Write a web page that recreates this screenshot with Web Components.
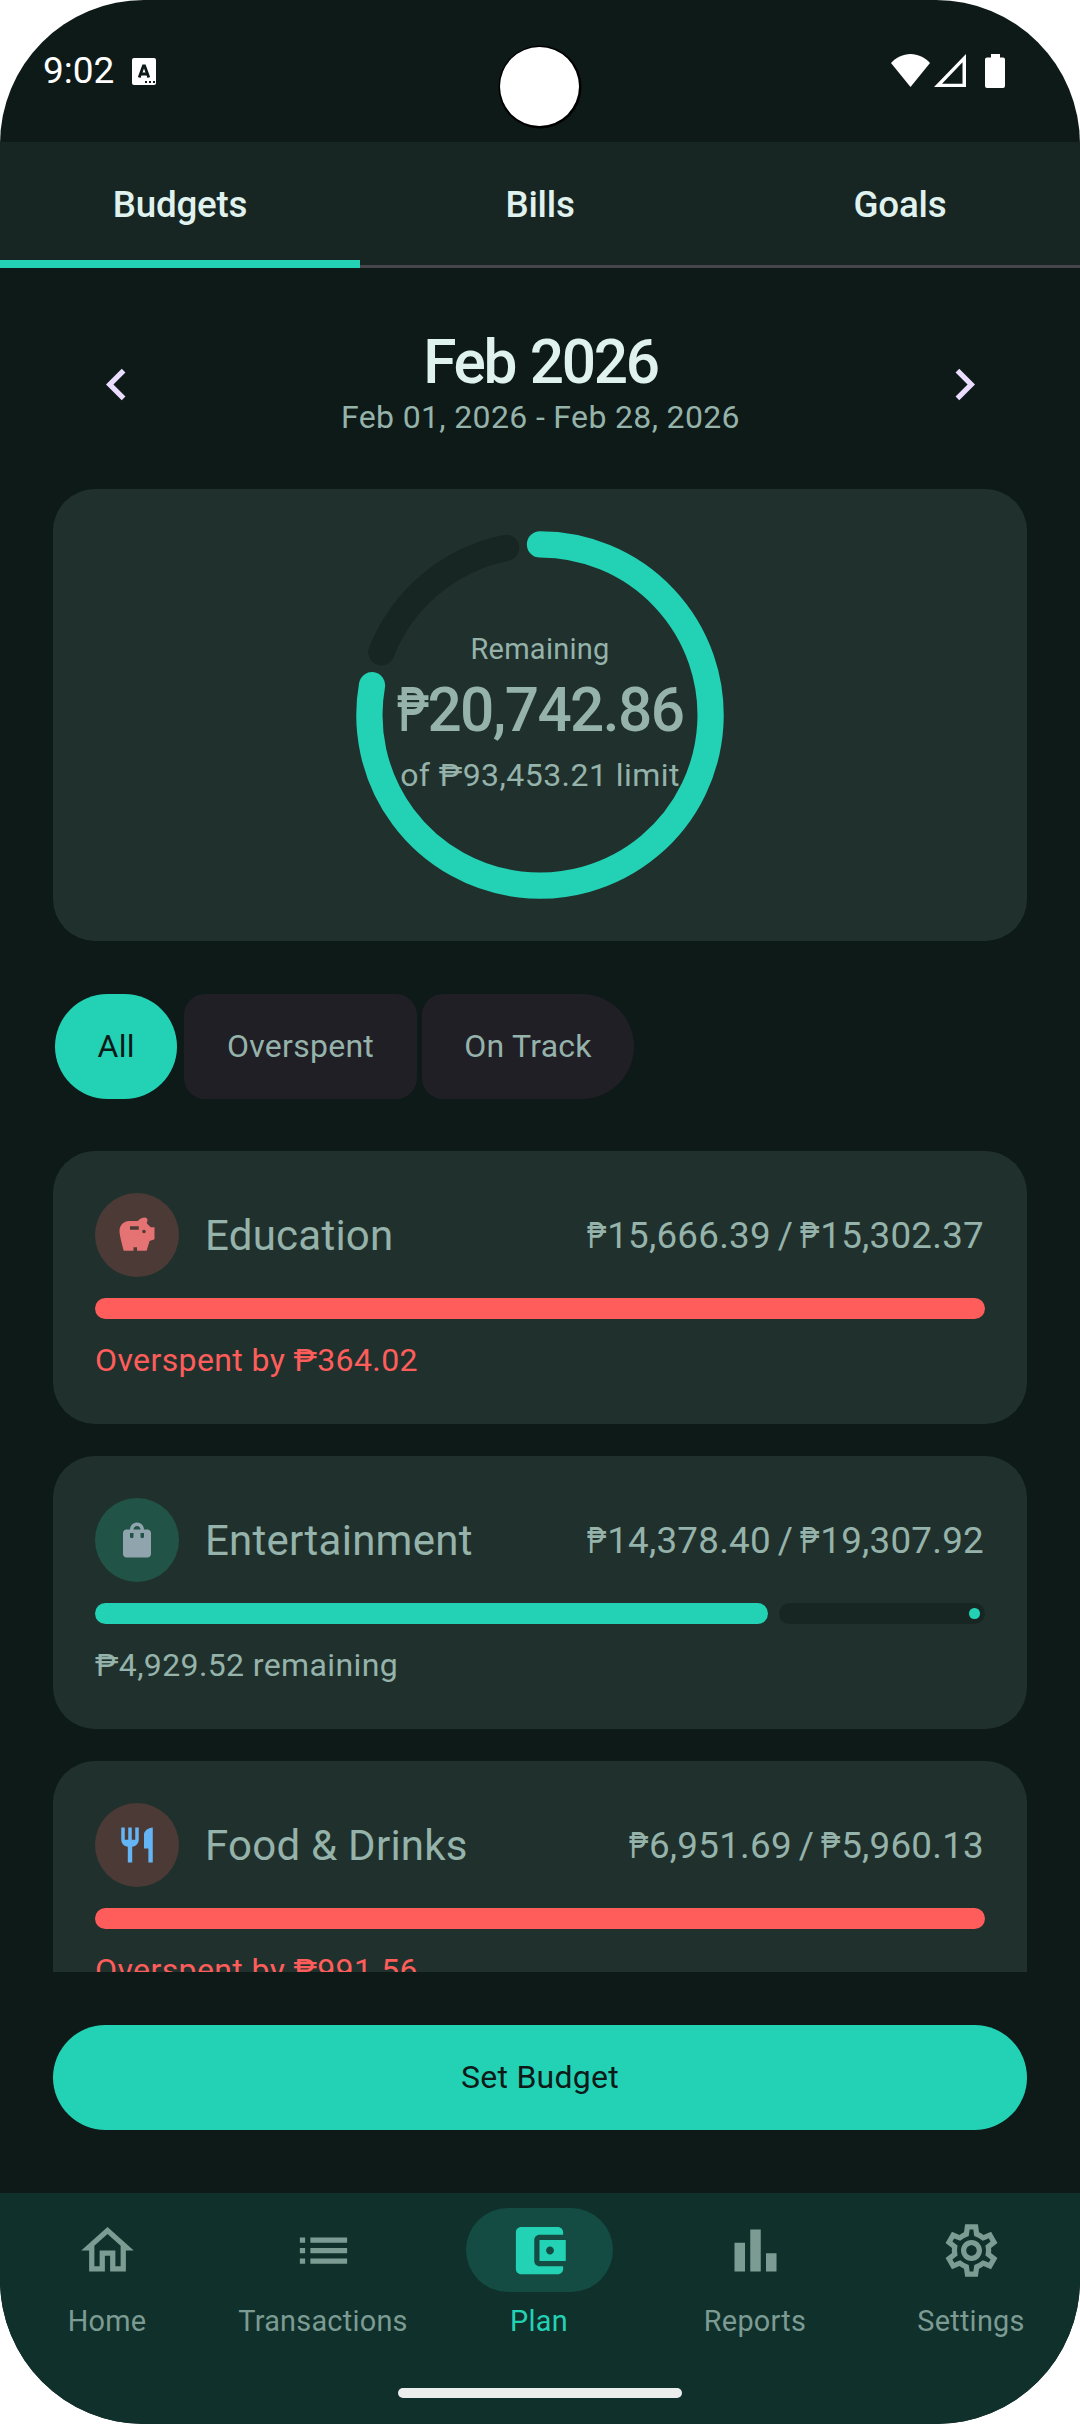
<!DOCTYPE html>
<html lang="en">
<head>
<meta charset="utf-8">
<title>Budgets</title>
<style>
    body {
        margin: 0;
        background: #fff;
        font-family: Roboto, "Noto Sans", sans-serif;
        --accent: #23d2b5;
        --danger: #ff5d5b;
        --bg: #0e1a18;
        --surface: #172623;
        --card: #20312d;
        --text: #e0f2ee;
        --muted: #95b3aa;
    }
</style>
</head>
<body>

<template id="phone-screen-template">
    <style>
        :host {
            display: flex;
            flex-direction: column;
            width: 1080px;
            height: 2424px;
            overflow: hidden;
            border-radius: 144px;
            background: var(--bg);
            color: var(--muted);
        }
        main {
            flex: 1;
            min-height: 0;
            display: flex;
            flex-direction: column;
            padding: 0 53px 63px;
        }
    </style>
    <slot name="top"></slot>
    <main><slot></slot></main>
    <slot name="bottom"></slot>
</template>

<template id="status-bar-template">
    <style>
        :host {
            display: flex;
            align-items: flex-start;
            box-sizing: border-box;
            height: 142px;
            padding: 54px 75px 0 43px;
            color: #fff;
            position: relative;
        }
        .time { font-size: 37px; line-height: 33px; margin-right: 16px; width: 73px; white-space: nowrap; }
        svg { display: block; }
        .badge { margin-top: 4px; }
        .space { flex: 1; }
        .wifi { margin-right: 4px; }
        .signal { margin-right: 19px; }
        /* the camera cut-out lies over the bar */
        .camera {
            position: absolute;
            left: 499.5px;
            top: 46.5px;
            width: 79px;
            height: 79px;
            border-radius: 50%;
            background: #fff;
            box-shadow: 0.5px 0.5px 0 2px #000;
        }
    </style>
    <span class="time"><slot></slot></span>
    <svg class="badge" width="24" height="27" viewBox="0 0 24 27">
        <rect width="24" height="27" rx="2" fill="#fff"/>
        <path d="M7.2 19.500L11.4 8h1.200l4.200 11.500M8.800 16h6.400" fill="none" stroke="#0e1a18" stroke-width="2.800"/>
        <path d="M13 24h2M17 24h2M21 24h2" stroke="#0e1a18" stroke-width="2"/>
    </svg>
    <span class="space"></span>
    <svg class="wifi" width="39" height="33" viewBox="0 0 39 33">
        <path d="M0 9C5 3.500 12 0 19.500 0S34 3.500 39 9L19.500 33z" fill="#fff"/>
    </svg>
    <svg class="signal" width="32" height="33" viewBox="0 0 32 33">
        <path d="M32 0v33H0zM28.500 8.200L8 29.700h20.500z" fill="#fff" fill-rule="evenodd"/>
    </svg>
    <svg width="20" height="34" viewBox="0 0 20 34">
        <path d="M6 0h9v3.500h3a2 2 0 0 1 2 2V32a2 2 0 0 1-2 2H2a2 2 0 0 1-2-2V5.500a2 2 0 0 1 2-2h4z" fill="#fff"/>
    </svg>
    <div class="camera"></div>
</template>

<template id="tab-strip-template">
    <style>
        :host {
            display: grid;
            grid-template-columns: repeat(3, 1fr);
            height: 126px;
            background: var(--surface);
            box-shadow: inset 0 -3px #47464d;
        }
    </style>
    <slot></slot>
</template>

<template id="tab-item-template">
    <style>
        :host {
            display: flex;
            align-items: center;
            justify-content: center;
            padding-bottom: 2px;
            color: var(--text);
            font-size: 36.75px;
            font-weight: 500;
            letter-spacing: -0.2px;
        }
        :host([selected]) { box-shadow: inset 0 -8px var(--accent); }
    </style>
    <slot></slot>
</template>

<template id="month-switcher-template">
    <style>
        :host {
            display: flex;
            justify-content: space-between;
            padding: 61px 31px 0 32px;
            height: 160px;
            text-align: center;
        }
        svg { width: 63px; height: 63px; fill: #eaddff; margin-top: 24px; }
        .title {
            color: var(--text);
            font-size: 60.375px;
            font-weight: 500;
            letter-spacing: -2.3px;
            word-spacing: 2px;
            line-height: 68px;
        }
        .range { font-size: 32px; letter-spacing: 0.35px; line-height: 40px; }
    </style>
    <svg viewBox="0 0 24 24"><path d="M15.410 7.410L14 6l-6 6 6 6 1.410-1.410L10.830 12z"/></svg>
    <div>
        <div class="title"><slot name="title"></slot></div>
        <div class="range"><slot></slot></div>
    </div>
    <svg viewBox="0 0 24 24"><path d="M8.590 16.590L10 18l6-6-6-6-1.410 1.410L13.170 12z"/></svg>
</template>

<template id="summary-ring-template">
    <style>
        :host {
            display: grid;
            place-items: center;
            flex: none;
            height: 452px;
            border-radius: 42px;
            background: var(--card);
        }
        svg, .text { grid-area: 1 / 1; }
        .text { text-align: center; white-space: nowrap; }
        .label { font-size: 29px; letter-spacing: 0.25px; line-height: 42px; }
        .amount { font-size: 60.375px; font-weight: 500; letter-spacing: -1.6px; line-height: 80px; padding-top: 1px; }
        .amount .sign { display: inline-block; width: 0.51em; transform: scaleX(0.72); transform-origin: left; }
        .limit { font-size: 32px; letter-spacing: 0.45px; line-height: 49px; padding-bottom: 2px; }
    </style>
    <svg width="368" height="368" viewBox="-184 -184 368 368" fill="none" stroke-width="26.250" stroke-linecap="round">
        <path id="track" stroke="var(--surface)"/>
        <path id="fill" stroke="var(--accent)"/>
    </svg>
    <div class="text">
        <div class="label">Remaining</div>
        <div class="amount"></div>
        <div class="limit"><slot></slot></div>
    </div>
</template>

<template id="filter-chips-template">
    <style>
        :host { display: flex; gap: 5px; padding: 53px 2px 52px; }
    </style>
    <slot></slot>
</template>

<template id="filter-chip-template">
    <style>
        :host {
            display: flex;
            align-items: center;
            justify-content: center;
            box-sizing: border-box;
            height: 105px;
            padding: 0 42.6px 2px;
            border-radius: 21px;
            background: #211f26;
            font-size: 32px;
            letter-spacing: 0.26px;
            white-space: nowrap;
        }
        :host(:last-child) { border-radius: 21px 52.5px 52.5px 21px; }
        :host([selected]) {
            margin-right: 2px;
            border-radius: 52.5px;
            background: var(--accent);
            color: var(--bg);
        }
    </style>
    <slot></slot>
</template>

<template id="budget-list-template">
    <style>
        :host {
            display: flex;
            flex-direction: column;
            gap: 32px;
            height: 821px;
            margin-bottom: 53px;
            overflow: hidden;
        }
    </style>
    <slot></slot>
</template>

<template id="budget-card-template">
    <style>
        :host {
            display: block;
            box-sizing: border-box;
            flex: none;
            height: 273px;
            padding: 42px;
            border-radius: 42px;
            background: var(--card);
            --tone: var(--accent);
            --tint: #215347;
        }
        :host([over]) { --tone: var(--danger); --tint: #4c3a36; }
        .head { display: flex; align-items: center; height: 84px; }
        .icon {
            display: grid;
            place-items: center;
            width: 84px;
            height: 84px;
            margin-right: 26px;
            border-radius: 50%;
            background: var(--tint);
        }
        .name { flex: 1; font-size: 42px; letter-spacing: 0.25px; }
        .amounts { font-size: 36.75px; letter-spacing: 0.25px; word-spacing: -2.5px; white-space: nowrap; padding-right: 1px; }
        .amounts .sign { display: inline-block; width: 0.55em; transform: scaleX(0.72); transform-origin: left; }
        .bar { display: flex; gap: 10.5px; height: 21px; margin: 21px 0; }
        .bar div { border-radius: 10.5px; }
        .fill { background: var(--tone); }
        .rest {
            flex: 1;
            display: flex;
            align-items: center;
            justify-content: flex-end;
            background: var(--surface);
        }
        .rest::after {
            content: "";
            width: 10.5px;
            height: 10.5px;
            margin-right: 5.25px;
            border-radius: 50%;
            background: var(--accent);
        }
        :host([over]) .rest { display: none; }
        .note { font-size: 32px; letter-spacing: 0.38px; line-height: 40px; }
        :host([over]) .note { color: var(--danger); }
    </style>
    <div class="head">
        <div class="icon"><slot name="icon"></slot></div>
        <div class="name"></div>
        <div class="amounts"></div>
    </div>
    <div class="bar"><div class="fill"></div><div class="rest"></div></div>
    <div class="note"><slot></slot></div>
</template>

<template id="pill-button-template">
    <style>
        :host {
            display: flex;
            align-items: center;
            justify-content: center;
            flex: none;
            box-sizing: border-box;
            height: 105px;
            padding-bottom: 2px;
            border-radius: 52.5px;
            background: var(--accent);
            color: var(--bg);
            font-size: 32px;
            letter-spacing: 0.26px;
        }
    </style>
    <slot></slot>
</template>

<template id="nav-bar-template">
    <style>
        :host {
            display: flex;
            flex-direction: column;
            align-items: center;
            height: 231px;
            background: #10302b;
        }
        nav { display: grid; grid-template-columns: repeat(5, 1fr); width: 1080px; height: 195px; margin-right: 2px; }
        .handle { width: 284px; height: 10px; border-radius: 5px; background: #eceeed; }
    </style>
    <nav><slot></slot></nav>
    <div class="handle"></div>
</template>

<template id="nav-item-template">
    <style>
        :host {
            display: flex;
            flex-direction: column;
            align-items: center;
            padding-top: 15px;
            color: #7c9b93;
            font-size: 28.875px;
            letter-spacing: 0.25px;
            line-height: 42px;
        }
        .pill {
            display: grid;
            place-items: center;
            width: 147px;
            height: 84px;
            margin-bottom: 8px;
            border-radius: 42px;
        }
        svg { width: 63px; height: 63px; fill: currentColor; }
        :host([selected]) { color: var(--accent); }
        :host([selected]) .pill { background: #144c43; }
    </style>
    <div class="pill"><svg viewBox="0 0 24 24"><path fill-rule="evenodd"/></svg></div>
    <slot></slot>
</template>

<phone-screen>
    <status-bar slot="top">9:02</status-bar>
    <tab-strip slot="top">
        <tab-item selected>Budgets</tab-item>
        <tab-item>Bills</tab-item>
        <tab-item>Goals</tab-item>
    </tab-strip>

    <month-switcher><span slot="title">Feb 2026</span>Feb 01, 2026 - Feb 28, 2026</month-switcher>
    <summary-ring value="0.778" amount="₱20,742.86">of ₱93,453.21 limit</summary-ring>

    <filter-chips>
        <filter-chip selected>All</filter-chip>
        <filter-chip>Overspent</filter-chip>
        <filter-chip>On Track</filter-chip>
    </filter-chips>

    <budget-list>
        <budget-card over name="Education" spent="₱15,666.39" limit="₱15,302.37" value="1">
            <svg slot="icon" width="42" height="42" viewBox="0 0 24 24" fill="#e57373"><path d="M19.830 7.500l-2.270-2.270c.07-.42.18-.81.32-1.150.08-.18.12-.37.12-.58 0-.83-.67-1.500-1.500-1.500-1.640 0-3.090.79-4 2h-5C4.460 4 2 6.460 2 9.500S4.500 21 4.500 21H10v-2h2v2h5.500l1.680-5.590 2.820-.94V7.500h-2.170zM13 9H8V7h5v2zm3 2c-.55 0-1-.45-1-1s.45-1 1-1 1 .45 1 1-.45 1-1 1z"/></svg>
            Overspent by ₱364.02
        </budget-card>
        <budget-card name="Entertainment" spent="₱14,378.40" limit="₱19,307.92" value="0.7447">
            <svg slot="icon" width="42" height="42" viewBox="0 0 24 24" fill="#90a4ae"><path d="M18 6h-2c0-2.210-1.790-4-4-4S8 3.790 8 6H6c-1.100 0-2 .9-2 2v12c0 1.100.9 2 2 2h12c1.100 0 2-.9 2-2V8c0-1.100-.9-2-2-2zm-8 4c0 .55-.45 1-1 1s-1-.45-1-1V8h2v2zm2-6c1.100 0 2 .9 2 2h-4c0-1.100.9-2 2-2zm4 6c0 .55-.45 1-1 1s-1-.45-1-1V8h2v2z"/></svg>
            ₱4,929.52 remaining
        </budget-card>
        <budget-card over name="Food &amp; Drinks" spent="₱6,951.69" limit="₱5,960.13" value="1">
            <svg slot="icon" width="42" height="42" viewBox="0 0 24 24" fill="#64b5f6"><path d="M11 9H9V2H7v7H5V2H3v7c0 2.120 1.660 3.840 3.750 3.970V22h2.500v-9.030C11.340 12.840 13 11.120 13 9V2h-2v7zm5-3v8h2.500v8H21V2c-2.760 0-5 2.240-5 4z"/></svg>
            Overspent by ₱991.56
        </budget-card>
    </budget-list>

    <pill-button>Set Budget</pill-button>

    <nav-bar slot="bottom">
        <nav-item icon="home">Home</nav-item>
        <nav-item icon="list">Transactions</nav-item>
        <nav-item icon="wallet" selected>Plan</nav-item>
        <nav-item icon="chart">Reports</nav-item>
        <nav-item icon="settings">Settings</nav-item>
    </nav-bar>
</phone-screen>

<script>

const navIcons = {
    home: 'M12 5.690l5 4.500V18h-2v-6H9v6H7v-7.810l5-4.500M12 3L2 12h3v8h6v-6h2v6h6v-8h3L12 3z',
    list: 'M3 13h2v-2H3v2zm0 4h2v-2H3v2zm0-8h2V7H3v2zm4 4h14v-2H7v2zm0 4h14v-2H7v2zM7 7v2h14V7H7z',
    wallet: 'M21 18v1c0 1.100-.9 2-2 2H5c-1.110 0-2-.9-2-2V5c0-1.100.89-2 2-2h14c1.100 0 2 .9 2 2v1h-9c-1.110 0-2 .9-2 2v8c0 1.100.89 2 2 2h9zm-9-2h10V8H12v8zm4-2.500c-.83 0-1.500-.67-1.500-1.500s.67-1.500 1.500-1.500 1.500.67 1.500 1.500-.67 1.500-1.500 1.500z',
    chart: 'M4 9h4v11H4V9zm12 4h4v7h-4v-7zm-6-9h4v16h-4V4z',
    settings: 'M19.440 12.990c.04-.31.070-.65.070-.99s-.030-.66-.070-.97l2.450-1.920-2.430-4.220-2.870 1.160c-.52-.4-1.080-.73-1.700-.99L14.440 2H9.570l-.44 3.070c-.62.26-1.180.59-1.700.99L4.560 4.890 2.120 9.110l2.450 1.920c-.040.31-.070.63-.070.97s.030.68.070.99l-2.440 1.910 2.430 4.200 2.880-1.150c.52.4 1.080.72 1.700.98L9.580 22h4.850l.44-3.070c.62-.26 1.180-.58 1.700-.98l2.880 1.150 2.430-4.200zM17.450 11.270c.040.31.050.52.050.73s-.020.43-.050.73l-.14 1.130.89.7 1.080.84-.7 1.210-1.270-.51-1.040-.42-.9.68c-.43.32-.84.56-1.250.73l-1.060.43-.16 1.130-.2 1.350h-1.400l-.19-1.350-.16-1.130-1.060-.43c-.43-.18-.83-.41-1.230-.71l-.91-.7-1.060.43-1.270.51-.7-1.210 1.080-.84.89-.7-.14-1.130c-.030-.31-.050-.54-.050-.74s.020-.43.050-.73l.14-1.130-.89-.7-1.080-.84.7-1.210 1.270.51 1.040.42.9-.68c.43-.32.84-.56 1.250-.73l1.060-.43.16-1.130.2-1.350h1.390l.19 1.350.16 1.130 1.060.43c.43.18.83.41 1.230.71l.91.7 1.060-.43 1.270-.51.7 1.210-1.070.85-.89.7.14 1.130zM12 8c-2.210 0-4 1.790-4 4s1.790 4 4 4 4-1.790 4-4-1.790-4-4-4zm0 6c-1.100 0-2-.9-2-2s.9-2 2-2 2 .9 2 2-.9 2-2 2z'
};

// the large amounts use a narrower currency sign
function money(text){
    return text.replace(/₱/g, '<span class="sign">₱</span>');
}

// base class: clones the <template> named after the tag
class TemplateElement extends HTMLElement {
    connectedCallback(){
        if (this.shadowRoot) return;
        let template = document.querySelector('#' + this.localName + '-template');
        this.attachShadow({mode: 'open'}).appendChild(template.content.cloneNode(true));
        this.render(this.shadowRoot);
    }
    render(root){}
}

class SummaryRing extends TemplateElement {
    render(root){
        let end = this.getAttribute('value') * 360;
        let gap = 11.46; // degrees between the round caps
        root.querySelector('#fill').setAttribute('d', this.arc(0, end));
        root.querySelector('#track').setAttribute('d', this.arc(end + gap, 360 - gap));
        root.querySelector('.amount').innerHTML = money(this.getAttribute('amount'));
    }
    arc(from, to){
        let r = 170.6;
        let point = deg => {
            let a = (deg - 90) * Math.PI / 180;
            return (r * Math.cos(a)).toFixed(2) + ' ' + (r * Math.sin(a)).toFixed(2);
        };
        return `M${point(from)}A${r} ${r} 0 ${to - from > 180 ? 1 : 0} 1 ${point(to)}`;
    }
}

class BudgetCard extends TemplateElement {
    render(root){
        root.querySelector('.name').textContent = this.getAttribute('name');
        root.querySelector('.amounts').innerHTML = money(this.getAttribute('spent') + ' / ' + this.getAttribute('limit'));
        let value = Number(this.getAttribute('value'));
        root.querySelector('.fill').style.width = value < 1 ? `calc(${value * 100}% + 10.5px)` : '100%';
    }
}

class NavItem extends TemplateElement {
    render(root){
        root.querySelector('path').setAttribute('d', navIcons[this.getAttribute('icon')]);
    }
}

for (let tag of ['phone-screen', 'status-bar', 'tab-strip', 'tab-item', 'month-switcher', 'filter-chips', 'filter-chip', 'budget-list', 'pill-button', 'nav-bar']) {
    window.customElements.define(tag, class extends TemplateElement {});
}
window.customElements.define('summary-ring', SummaryRing);
window.customElements.define('budget-card', BudgetCard);
window.customElements.define('nav-item', NavItem);

</script>
</body>
</html>
